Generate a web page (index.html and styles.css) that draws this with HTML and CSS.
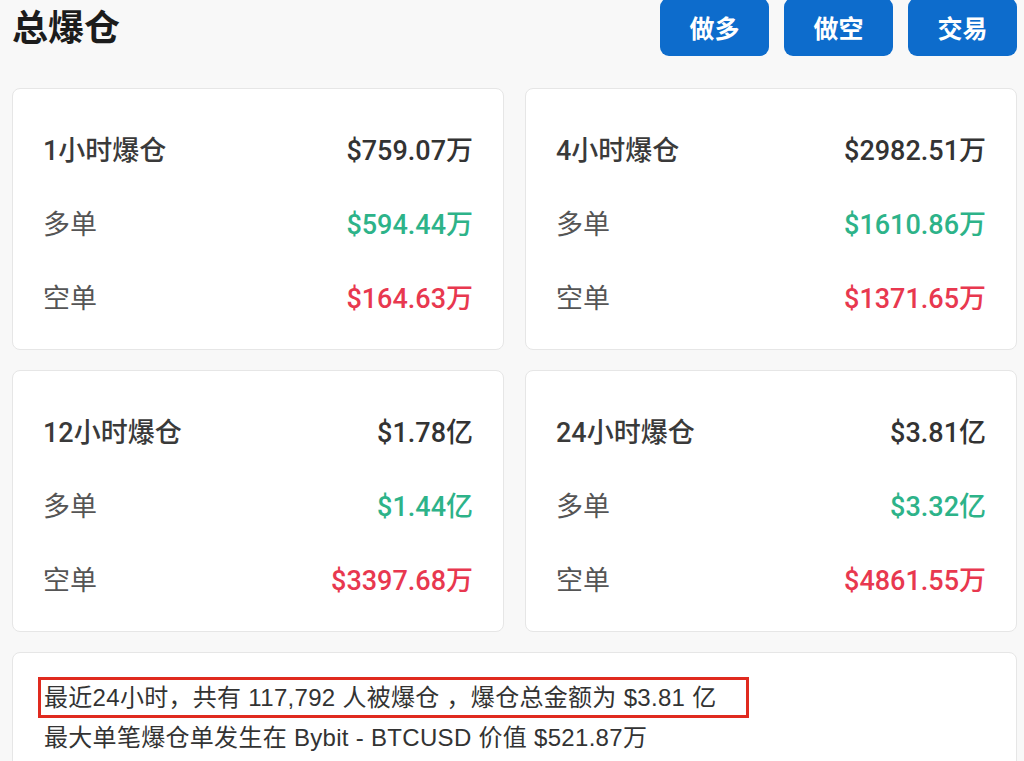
FILE: index.html
```html
<!DOCTYPE html>
<html lang="zh-CN">
<head>
    <meta charset="UTF-8">
    <meta name="viewport" content="width=device-width, initial-scale=1.0">
    <title>总爆仓</title>
    <link rel="stylesheet" href="styles.css">
</head>
<body>

<header>
    <div class="title">总爆仓</div>
    <nav>
        <a href="#">做多</a>
        <a href="#">做空</a>
        <a href="#">交易</a>
    </nav>
</header>

<div class="card-list">
    <div class="card">
        <div class="row head"><span>1小时爆仓</span><span class="num">$759.07万</span></div>
        <div class="row"><span>多单</span><span class="num up">$594.44万</span></div>
        <div class="row"><span>空单</span><span class="num down">$164.63万</span></div>
    </div>
    <div class="card">
        <div class="row head"><span>4小时爆仓</span><span class="num">$2982.51万</span></div>
        <div class="row"><span>多单</span><span class="num up">$1610.86万</span></div>
        <div class="row"><span>空单</span><span class="num down">$1371.65万</span></div>
    </div>
    <div class="card">
        <div class="row head"><span>12小时爆仓</span><span class="num">$1.78亿</span></div>
        <div class="row"><span>多单</span><span class="num up">$1.44亿</span></div>
        <div class="row"><span>空单</span><span class="num down">$3397.68万</span></div>
    </div>
    <div class="card">
        <div class="row head"><span>24小时爆仓</span><span class="num">$3.81亿</span></div>
        <div class="row"><span>多单</span><span class="num up">$3.32亿</span></div>
        <div class="row"><span>空单</span><span class="num down">$4861.55万</span></div>
    </div>
</div>

<div class="summary">
    <p class="mark">最近24小时，共有 117,792 人被爆仓 ，爆仓总金额为 $3.81 亿</p>
    <p>最大单笔爆仓单发生在 Bybit - BTCUSD 价值 $521.87万</p>
</div>

</body>
</html>
```

FILE: styles.css
```css
body {
    font-family: Roboto, "Noto Sans CJK SC", sans-serif;
    margin: 0;
    padding: 0 7px 0 12px;
    background-color: #f8f8f8;
    color: #333;
    overflow: hidden;
}
header {
    display: flex;
    justify-content: space-between;
    align-items: flex-start;
    height: 88px;
}
header .title {
    font-size: 36px;
    font-weight: bold;
    color: #1c1c1c;
    line-height: 58px;
}
header nav {
    display: flex;
    gap: 15px;
    margin-top: -2px;
}
header nav a {
    display: flex;
    align-items: center;
    justify-content: center;
    width: 109px;
    height: 58px;
    background-color: #0d6ccc;
    border-radius: 9px;
    color: white;
    text-decoration: none;
    font-size: 25px;
    font-weight: bold;
}
.card-list {
    display: grid;
    grid-template-columns: 1fr 1fr;
    column-gap: 21px;
    row-gap: 20px;
}
.card {
    background-color: white;
    border: 1px solid #e6e6e6;
    border-radius: 8px;
    padding: 22px 30px 16px 30px;
}
.row {
    display: flex;
    justify-content: space-between;
    align-items: center;
    height: 74px;
    font-size: 27px;
    color: #555;
}
.row.head {
    font-weight: 500;
    color: #3a3a3a;
}
.row .num {
    color: #333;
    font-weight: 500;
}
.row .up {
    color: #2db389;
}
.row .down {
    color: #e8384f;
}
.summary {
    margin-top: 20px;
    background-color: white;
    border: 1px solid #e6e6e6;
    border-radius: 8px;
    padding: 24px 0 0 25px;
    height: 140px;
}
.summary p {
    margin: 0;
    font-family: "Liberation Sans", "Noto Sans CJK SC", sans-serif;
    font-size: 24px;
    letter-spacing: 0.3px;
    line-height: 40px;
    color: #333;
    padding-left: 6px;
}
.summary p.mark {
    display: inline-block;
    border: 3px solid #e02a1f;
    padding: 0 30px 0 3px;
    line-height: 35px;
}
```
